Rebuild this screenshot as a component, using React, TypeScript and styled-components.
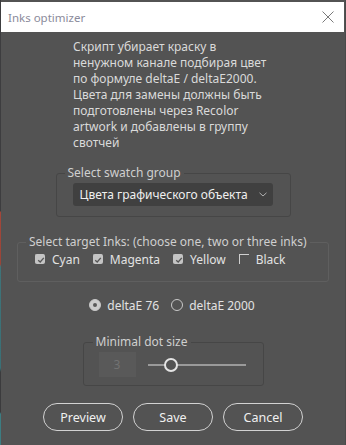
import styled, { createGlobalStyle } from "styled-components";

const GlobalStyle = createGlobalStyle`
  html, body {
    margin: 0;
    padding: 0;
    background: #535353;
  }
  body {
    font-family: "Noto Sans", "Open Sans", sans-serif;
    font-size: 12px;
    -webkit-font-smoothing: antialiased;
  }
`;

const Screen = styled.div`
  display: flex;
  width: 346px;
  height: 445px;
  overflow: hidden;
`;

// sliver of whatever sits behind the dialog
const Backdrop = styled.div`
  width: 1px;
  flex: none;
  background: linear-gradient(
    to bottom,
    #3d3d3f 0px,
    #3d3d3f 211px,
    #a3473a 212px,
    #9a4538 264px,
    #3e7479 267px,
    #3a7076 368px,
    #3b3b3d 372px,
    #3b3b3d 412px,
    #3c7d82 414px
  );
`;

const Window = styled.div`
  flex: 1;
  display: flex;
  flex-direction: column;
  align-items: center;
  padding-top: 2px;
  background: #535353;
  border-right: 1px solid #4a4a4a;
`;

const TitleBar = styled.div`
  align-self: stretch;
  height: 30px;
  background: #fff;
  display: flex;
  align-items: center;
  justify-content: space-between;
  padding: 0 10px 0 7px;
  margin-right: 1px;
  flex: none;
`;

const Title = styled.span`
  font-size: 11.5px;
  color: #8b8b9b;
`;

const Close = styled.svg`
  width: 12px;
  height: 12px;
`;

const Description = styled.div`
  align-self: flex-start;
  margin: 7px 0 0 72px;
  color: #dadada;
  line-height: 16px;
  white-space: nowrap;
`;

const Group = styled.fieldset<{ $w: number }>`
  width: ${(p) => p.$w}px;
  box-sizing: border-box;
  margin: 0;
  padding: 0;
  min-inline-size: 0;
  border: 1px solid #464646;
  border-radius: 3px;
`;

const Legend = styled.legend<{ $ml?: number }>`
  margin-left: ${(p) => p.$ml ?? 8}px;
  padding: 0 3px;
  color: #cfcfcf;
  line-height: 14px;
`;

const SwatchGroup = styled(Group)`
  margin-top: 15px;
  padding: 3px 0 10px;
`;

const Dropdown = styled.div`
  width: 200px;
  height: 23px;
  margin-left: 16px;
  box-sizing: border-box;
  background: #404040;
  border-radius: 3px;
  display: flex;
  align-items: center;
  justify-content: space-between;
  padding: 0 6px 0 7px;
  color: #efefef;
  font-size: 12px;
`;

const InksGroup = styled(Group)`
  margin-top: 18px;
  padding: 2px 0 14px;
  border-color: #5f5f5f;
`;

const Row = styled.div<{ $gap: number }>`
  display: flex;
  align-items: center;
  gap: ${(p) => p.$gap}px;
  height: 16px;
`;

const InkRow = styled(Row)`
  padding-left: 17px;
`;

const Option = styled.label<{ $gap: number }>`
  display: flex;
  align-items: center;
  gap: ${(p) => p.$gap}px;
  color: #e2e2e2;
`;

const Box = styled.span<{ $on: boolean }>`
  width: 10px;
  height: 10px;
  box-sizing: border-box;
  border-radius: ${(p) => (p.$on ? 2 : 0)}px;
  background: ${(p) => (p.$on ? "#c4c4c4" : "transparent")};
  border-top: 1px solid ${(p) => (p.$on ? "#c4c4c4" : "#cfcfcf")};
  border-left: 1px solid ${(p) => (p.$on ? "#c4c4c4" : "#cfcfcf")};
  display: flex;
  align-items: center;
  justify-content: center;
`;

const RadioRow = styled(Row)`
  margin-top: 15px;
  margin-left: -2px;
`;

const Radio = styled.span<{ $on: boolean }>`
  width: 12px;
  height: 12px;
  box-sizing: border-box;
  border-radius: 50%;
  border: 1px solid #c8c8c8;
  background: ${(p) => (p.$on ? "#cdcdcd" : "transparent")};
  display: flex;
  align-items: center;
  justify-content: center;
  &::after {
    content: "";
    display: ${(p) => (p.$on ? "block" : "none")};
    width: 4px;
    height: 4px;
    border-radius: 50%;
    background: #5a5a5a;
  }
`;

const DotGroup = styled(Group)`
  margin-top: 22px;
  padding: 3px 0 8px;
`;

const DotRow = styled.div`
  display: flex;
  align-items: center;
  gap: 12px;
  padding-left: 15px;
`;

const NumberField = styled.div`
  width: 37px;
  height: 25px;
  background: #595959;
  color: #727272;
  display: flex;
  align-items: center;
  justify-content: center;
`;

const Slider = styled.div`
  position: relative;
  width: 98px;
  height: 14px;
  display: flex;
  align-items: center;
  &::before {
    content: "";
    flex: 1;
    height: 2px;
    background: #9a9a9a;
  }
`;

const Thumb = styled.span`
  position: absolute;
  left: 16px;
  top: 0;
  width: 14px;
  height: 14px;
  box-sizing: border-box;
  border-radius: 50%;
  border: 2px solid #e4e4e4;
  background: #535353;
`;

const Buttons = styled.div`
  display: flex;
  gap: 10px;
  margin-top: 17px;
`;

const Button = styled.button`
  width: 80px;
  height: 28px;
  box-sizing: border-box;
  border: 1px solid #d2d2d2;
  border-radius: 14px;
  background: transparent;
  color: #f0f0f0;
  font-family: "Noto Sans", "Open Sans", sans-serif;
  font-size: 12.5px;
  padding: 0;
`;

const descriptionLines = [
  "Скрипт убирает краску в",
  "ненужном канале подбирая цвет",
  "по формуле deltaE / deltaE2000.",
  "Цвета для замены должны быть",
  "подготовлены через Recolor",
  "artwork и добавлены в группу",
  "свотчей",
];

const inks = [
  { name: "Cyan", on: true },
  { name: "Magenta", on: true },
  { name: "Yellow", on: true },
  { name: "Black", on: false },
];

function Check() {
  return (
    <svg width="8" height="8" viewBox="0 0 8 8">
      <path d="M1.2 4.2 L3.2 6 L6.8 1.8" fill="none" stroke="#555" strokeWidth="1.3" />
    </svg>
  );
}

export default function App() {
  return (
    <Screen>
      <GlobalStyle />
      <Backdrop />
      <Window>
        <TitleBar>
          <Title>Inks optimizer</Title>
          <Close viewBox="0 0 12 12">
            <path d="M0.5 0.5 L11.5 11.5 M11.5 0.5 L0.5 11.5" stroke="#7a7a7a" strokeWidth="1" />
          </Close>
        </TitleBar>

        <Description>
          {descriptionLines.map((line) => (
            <div key={line}>{line}</div>
          ))}
        </Description>

        <SwatchGroup $w={235}>
          <Legend>Select swatch group</Legend>
          <Dropdown>
            <span>Цвета графического объекта</span>
            <svg width="8" height="5" viewBox="0 0 8 5">
              <path d="M0.5 0.8 L4 4 L7.5 0.8" fill="none" stroke="#b0b0b0" strokeWidth="1" />
            </svg>
          </Dropdown>
        </SwatchGroup>

        <InksGroup $w={312}>
          <Legend>Select target Inks: (choose one, two or three inks)</Legend>
          <InkRow $gap={13}>
            {inks.map((ink) => (
              <Option key={ink.name} $gap={7}>
                <Box $on={ink.on}>{ink.on && <Check />}</Box>
                {ink.name}
              </Option>
            ))}
          </InkRow>
        </InksGroup>

        <RadioRow $gap={12}>
          <Option $gap={6}>
            <Radio $on={true} />
            deltaE 76
          </Option>
          <Option $gap={6}>
            <Radio $on={false} />
            deltaE 2000
          </Option>
        </RadioRow>

        <DotGroup $w={181}>
          <Legend $ml={9}>Minimal dot size</Legend>
          <DotRow>
            <NumberField>3</NumberField>
            <Slider>
              <Thumb />
            </Slider>
          </DotRow>
        </DotGroup>

        <Buttons>
          <Button>Preview</Button>
          <Button>Save</Button>
          <Button>Cancel</Button>
        </Buttons>
      </Window>
    </Screen>
  );
}
